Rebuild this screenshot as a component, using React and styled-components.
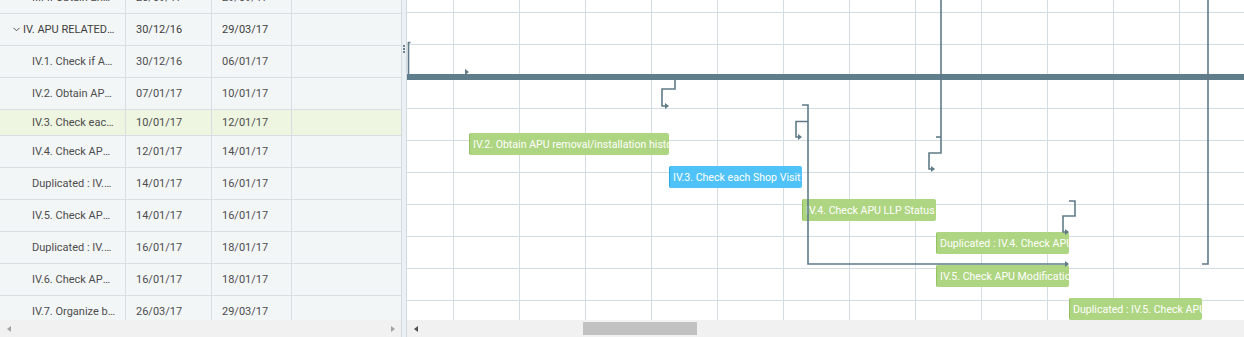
import React from 'react';
import styled, { createGlobalStyle } from 'styled-components';

const Global = createGlobalStyle`
  html, body { margin: 0; padding: 0; overflow: hidden; background: #fff; }
  body { font-family: Roboto, "Liberation Sans", sans-serif; }
  * { box-sizing: border-box; }
`;

const Shell = styled.div`
  display: flex;
  width: 1244px;
  height: 337px;
  overflow: hidden;
`;

/* ---------- left grid ---------- */
const LeftPane = styled.div`
  width: 402px;
  flex: none;
  display: flex;
  flex-direction: column;
  border-right: 1px solid #d3dbe0;
  background: #f3f6f7;
`;

const GridViewport = styled.div`
  flex: 1;
  overflow: hidden;
`;

const GridBody = styled.div`
  margin-top: -18px;
`;

const Row = styled.div`
  display: grid;
  grid-template-columns: 126px 86px 80px 109px;
  height: ${(p) => p.$h}px;
  border-bottom: 1px solid #d9dee2;
  background: ${(p) => (p.$selected ? '#eef5e1' : 'transparent')};
`;

const Cell = styled.div`
  display: flex;
  align-items: center;
  min-width: 0;
  padding-left: ${(p) => p.$indent}px;
  padding-right: 9px;
  border-right: ${(p) => (p.$last ? 'none' : '1px solid #d9dee2')};
  font-size: 11px;
  color: ${(p) => (p.$group ? '#3e3e3e' : '#4d4d4d')};
  white-space: nowrap;
  overflow: hidden;
`;

const CellText = styled.span`
  overflow: hidden;
  text-overflow: ellipsis;
`;

const Chevron = styled.svg`
  flex: none;
  width: 7px;
  height: 5px;
  margin-right: 3px;
  margin-left: -9px;
`;

const HScroll = styled.div`
  height: 17px;
  flex: none;
  display: flex;
  align-items: center;
  background: #f1f1f1;
`;

const ScrollBtn = styled.div`
  width: 17px;
  height: 17px;
  flex: none;
  display: flex;
  align-items: center;
  justify-content: center;
`;

const Tri = styled.span`
  width: 0;
  height: 0;
  border-top: 3.5px solid transparent;
  border-bottom: 3.5px solid transparent;
  ${(p) =>
    p.$dir === 'left'
      ? `border-right: 4px solid ${p.$color};`
      : `border-left: 4px solid ${p.$color};`}
`;

const Spacer = styled.div`
  flex: 1;
`;

/* ---------- splitter ---------- */
const Splitter = styled.div`
  width: 5px;
  flex: none;
  background: #eaf0f3;
  border-right: 1px solid #d3dbe0;
  display: flex;
  flex-direction: column;
  align-items: center;
  padding-top: 45px;
  gap: 1px;
`;

const GripDot = styled.span`
  width: 2px;
  height: 2px;
  background: #6f7f8c;
`;

/* ---------- gantt ---------- */
const GanttPane = styled.div`
  flex: 1;
  min-width: 0;
  display: flex;
  flex-direction: column;
`;

const Canvas = styled.div`
  position: relative;
  flex: 1;
  overflow: hidden;
  background-color: #fff;
  background-image: linear-gradient(to right, #d4dde2 1px, transparent 1px),
    linear-gradient(to bottom, #d4dde2 1px, transparent 1px);
  background-size: 66px 100%, 100% 32px;
  background-position: 46px 0, 0 12px;
`;

const SummaryBar = styled.div`
  position: absolute;
  left: 0;
  right: 0;
  top: 74px;
  height: 6px;
  background: #607d8b;
`;

const Links = styled.svg`
  position: absolute;
  left: 0;
  top: 0;
  width: 837px;
  height: 320px;
  pointer-events: none;
`;

const Bar = styled.div`
  position: absolute;
  height: 22px;
  display: flex;
  align-items: center;
  padding-left: 3px;
  border-radius: 2px;
  border-left: 1px solid ${(p) => (p.$kind === 'blue' ? '#29a9e6' : '#93c25e')};
  background: ${(p) => (p.$kind === 'blue' ? '#4fc3f7' : '#aed581')};
  color: #fff;
  font-size: 10.6px;
  white-space: nowrap;
  overflow: hidden;
`;

const Thumb = styled.div`
  width: 114px;
  height: 13px;
  margin-left: 159px;
  background: #c1c1c1;
`;

const rows = [
  { name: 'III.4. Obtain Engine records', s: '20/09/17', e: '29/09/17' },
  { name: 'IV. APU RELATED TASKS', s: '30/12/16', e: '29/03/17', group: true },
  { name: 'IV.1. Check if APU installed', s: '30/12/16', e: '06/01/17' },
  { name: 'IV.2. Obtain APU removal/installation history', s: '07/01/17', e: '10/01/17' },
  { name: 'IV.3. Check each Shop Visit', s: '10/01/17', e: '12/01/17', selected: true, h: 26 },
  { name: 'IV.4. Check APU LLP Status', s: '12/01/17', e: '14/01/17' },
  { name: 'Duplicated : IV.4. Check APU LLP Status', s: '14/01/17', e: '16/01/17' },
  { name: 'IV.5. Check APU Modification', s: '14/01/17', e: '16/01/17' },
  { name: 'Duplicated : IV.5. Check APU Modification', s: '16/01/17', e: '18/01/17' },
  { name: 'IV.6. Check APU AD status', s: '16/01/17', e: '18/01/17' },
  { name: 'IV.7. Organize back to birth', s: '26/03/17', e: '29/03/17' },
];

const bars = [
  { text: 'IV.2. Obtain APU removal/installation history', left: 62, top: 133, width: 200, kind: 'green' },
  { text: 'IV.3. Check each Shop Visit', left: 262, top: 166, width: 133, kind: 'blue' },
  { text: 'IV.4. Check APU LLP Status', left: 395, top: 199, width: 134, kind: 'green' },
  { text: 'Duplicated : IV.4. Check APU LLP Status', left: 529, top: 232, width: 133, kind: 'green' },
  { text: 'IV.5. Check APU Modification', left: 529, top: 265, width: 133, kind: 'green' },
  { text: 'Duplicated : IV.5. Check APU Modification', left: 662, top: 298, width: 133, kind: 'green' },
];

const LINK = '#5f7b89';

const arrow = (x, y) => `${x - 4},${y - 3} ${x},${y} ${x - 4},${y + 3}`;

function Connectors() {
  const paths = [
    'M3.5 42.5 H1.5 V74',
    'M268 80 V89 H255 V106 H259',
    'M395 105 H401 V264 H658',
    'M401 121.5 H389 V137 H392',
    'M534 0 V153 H522 V169 H525',
    'M529 137 H534',
    'M662 201 H668 V216 H656 V232 H658',
    'M801 0 V264 H795',
  ];
  const arrows = [
    [262, 106],
    [395, 137],
    [528, 169],
    [662, 232],
    [662, 264],
    [62, 72],
  ];
  return (
    <Links viewBox="0 0 837 320">
      {paths.map((d, i) => (
        <path key={i} d={d} fill="none" stroke={LINK} strokeWidth="1.6" />
      ))}
      {arrows.map(([x, y], i) => (
        <polygon key={i} points={arrow(x, y)} fill={LINK} />
      ))}
    </Links>
  );
}

export default function App() {
  return (
    <>
      <Global />
      <Shell>
        <LeftPane>
          <GridViewport>
            <GridBody>
              {rows.map((r, i) => (
                <Row key={i} $selected={r.selected} $h={r.h || 32}>
                  <Cell $indent={r.group ? 22 : 32} $group={r.group}>
                    {r.group && (
                      <Chevron viewBox="0 0 7 5">
                        <path d="M0.5 0.8 L3.5 3.8 L6.5 0.8" fill="none" stroke="#555" strokeWidth="1" />
                      </Chevron>
                    )}
                    <CellText>{r.name}</CellText>
                  </Cell>
                  <Cell $indent={10} $group={r.group}>
                    <CellText>{r.s}</CellText>
                  </Cell>
                  <Cell $indent={10} $group={r.group}>
                    <CellText>{r.e}</CellText>
                  </Cell>
                  <Cell $indent={10} $last />
                </Row>
              ))}
            </GridBody>
          </GridViewport>
          <HScroll>
            <ScrollBtn>
              <Tri $dir="left" $color="#a3a3a3" />
            </ScrollBtn>
            <Spacer />
            <ScrollBtn>
              <Tri $dir="right" $color="#a3a3a3" />
            </ScrollBtn>
          </HScroll>
        </LeftPane>
        <Splitter>
          <GripDot />
          <GripDot />
          <GripDot />
        </Splitter>
        <GanttPane>
          <Canvas>
            <SummaryBar />
            {bars.map((b, i) => (
              <Bar
                key={i}
                $kind={b.kind}
                style={{ left: b.left, top: b.top, width: b.width }}
              >
                {b.text}
              </Bar>
            ))}
            <Connectors />
          </Canvas>
          <HScroll>
            <ScrollBtn>
              <Tri $dir="left" $color="#505050" />
            </ScrollBtn>
            <Thumb />
          </HScroll>
        </GanttPane>
      </Shell>
    </>
  );
}
